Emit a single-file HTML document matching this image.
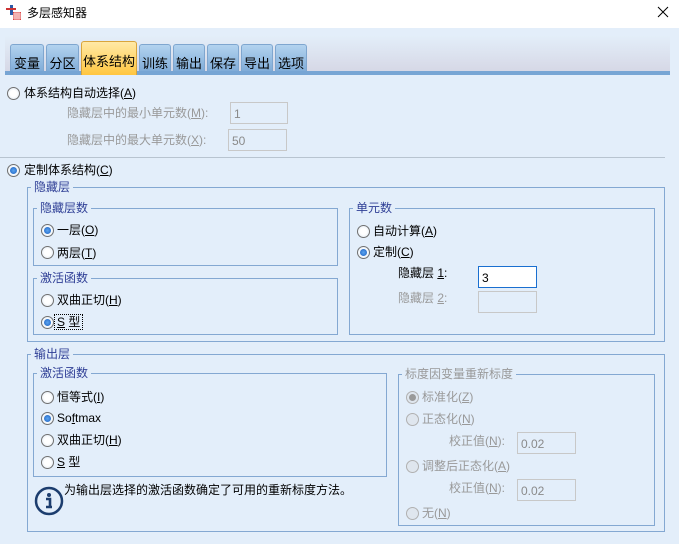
<!DOCTYPE html>
<html><head><meta charset="utf-8"><style>
*{margin:0;padding:0;box-sizing:border-box}
body{width:679px;height:544px;background:#e3eefa;font-family:"Liberation Sans","Noto Sans CJK SC",sans-serif;font-size:12px;color:#000;position:relative;overflow:hidden}
.a{position:absolute;white-space:nowrap;line-height:14px}
.title{position:absolute;left:0;top:0;width:679px;height:28px;background:#fff}
.strip{position:absolute;left:5px;top:36px;width:665px;height:35px;background:linear-gradient(#e3eef9,#d6d8e6)}
.bar{position:absolute;left:5px;top:71px;width:665px;height:4px;background:#77a5d4}
.tab{position:absolute;top:44px;height:27px;border:1px solid #7fa6cf;border-bottom:none;border-radius:3px 3px 0 0;background:linear-gradient(#b3d3ef,#80acd8);font-size:13px;padding-top:8px;text-align:center}
.tab.on{top:41px;height:34px;background:linear-gradient(#ffe9a6,#ffc640);border-color:#d9a53c;padding-top:9px}
.box{position:absolute;border:1px solid #84a8d2}
.gt{position:absolute;background:#e3eefa;color:#2f3f96;padding:0 3px;line-height:14px;white-space:nowrap}
.r{position:absolute;width:13px;height:13px;border-radius:50%;border:1px solid #707070;background:radial-gradient(#fff 40%,#d8e4ef)}
.r.on::after{content:"";position:absolute;left:2px;top:2px;width:7px;height:7px;border-radius:50%;background:radial-gradient(#5ba4f0,#1b5fbf)}
.r.dis{border-color:#b0b0b0;background:#dfe6ee}
.r.dis.on::after{background:#9a9a9a}
.in{position:absolute;border:1px solid #c8c8c8;background:#e3eefa;color:#8a8a8a;padding:4px 0 0 3px;line-height:14px}
.g{color:#999}
u{text-decoration:underline}
</style></head><body>
<div class="title"></div>
<svg class="a" style="left:6px;top:5px" width="16" height="16" viewBox="0 0 16 16"><rect x="0" y="3" width="3" height="2" fill="#c33"/><rect x="4" y="0" width="3" height="10" fill="#2b5aa8"/><rect x="1" y="3" width="9" height="2" fill="#c33"/><rect x="7" y="7" width="8" height="8" fill="#d44"/><path d="M7 9h8M7 11h8M7 13h8M9 7v8M11 7v8M13 7v8" stroke="#fff" stroke-width=".7"/></svg>
<div class="a" style="left:27px;top:6px;font-size:12px">多层感知器</div>
<svg class="a" style="left:657px;top:6px" width="12" height="12"><path d="M1 1L11 11M11 1L1 11" stroke="#000" stroke-width="1"/></svg>

<div class="strip"></div>
<div class="bar"></div>
<div class="tab" style="left:10px;width:34px">变量</div>
<div class="tab" style="left:46px;width:33px">分区</div>
<div class="tab on" style="left:81px;width:56px">体系结构</div>
<div class="tab" style="left:139px;width:32px">训练</div>
<div class="tab" style="left:173px;width:32px">输出</div>
<div class="tab" style="left:207px;width:32px">保存</div>
<div class="tab" style="left:241px;width:32px">导出</div>
<div class="tab" style="left:275px;width:32px">选项</div>

<div class="r" style="left:7px;top:87px"></div>
<div class="a" style="left:24px;top:86px">体系结构自动选择(<u>A</u>)</div>
<div class="a g" style="left:67px;top:106px">隐藏层中的最小单元数(<u>M</u>):</div>
<div class="in" style="left:230px;top:102px;width:58px;height:22px">1</div>
<div class="a g" style="left:67px;top:133px">隐藏层中的最大单元数(<u>X</u>):</div>
<div class="in" style="left:228px;top:129px;width:59px;height:22px">50</div>
<div class="a" style="left:0;top:157px;width:665px;height:1px;background:#b8c4d0"></div>
<div class="r on" style="left:7px;top:164px"></div>
<div class="a" style="left:24px;top:163px">定制体系结构(<u>C</u>)</div>

<div class="box" style="left:27px;top:187px;width:638px;height:155px"></div>
<div class="gt" style="left:31px;top:180px">隐藏层</div>
<div class="box" style="left:33px;top:208px;width:305px;height:58px"></div>
<div class="gt" style="left:37px;top:201px">隐藏层数</div>
<div class="r on" style="left:41px;top:224px"></div><div class="a" style="left:57px;top:223px">一层(<u>O</u>)</div>
<div class="r" style="left:41px;top:246px"></div><div class="a" style="left:57px;top:246px">两层(<u>T</u>)</div>
<div class="box" style="left:33px;top:278px;width:305px;height:57px"></div>
<div class="gt" style="left:37px;top:271px">激活函数</div>
<div class="r" style="left:41px;top:294px"></div><div class="a" style="left:57px;top:293px">双曲正切(<u>H</u>)</div>
<div class="r on" style="left:41px;top:316px"></div><div class="a" style="left:54px;top:314px;border:1px dotted #000;padding:0 2px"><u>S</u> 型</div>
<div class="box" style="left:349px;top:208px;width:306px;height:127px"></div>
<div class="gt" style="left:353px;top:201px">单元数</div>
<div class="r" style="left:357px;top:225px"></div><div class="a" style="left:373px;top:224px">自动计算(<u>A</u>)</div>
<div class="r on" style="left:357px;top:246px"></div><div class="a" style="left:373px;top:245px">定制(<u>C</u>)</div>
<div class="a" style="left:398px;top:266px">隐藏层 <u>1</u>:</div>
<div class="in" style="left:478px;top:266px;width:59px;height:22px;border-color:#1a6fd0;background:#fff;color:#000">3</div>
<div class="a g" style="left:398px;top:291px">隐藏层 <u>2</u>:</div>
<div class="in" style="left:478px;top:291px;width:59px;height:22px"></div>

<div class="box" style="left:27px;top:354px;width:638px;height:178px"></div>
<div class="gt" style="left:31px;top:347px">输出层</div>
<div class="box" style="left:33px;top:373px;width:354px;height:104px"></div>
<div class="gt" style="left:37px;top:366px">激活函数</div>
<div class="r" style="left:41px;top:391px"></div><div class="a" style="left:57px;top:390px">恒等式(<u>I</u>)</div>
<div class="r on" style="left:41px;top:412px"></div><div class="a" style="left:57px;top:411px">So<u>f</u>tmax</div>
<div class="r" style="left:41px;top:434px"></div><div class="a" style="left:57px;top:433px">双曲正切(<u>H</u>)</div>
<div class="r" style="left:41px;top:456px"></div><div class="a" style="left:57px;top:455px"><u>S</u> 型</div>
<svg class="a" style="left:34px;top:486px" width="30" height="30"><circle cx="15" cy="15" r="13" fill="none" stroke="#1c3d6e" stroke-width="2.5"/><circle cx="15" cy="9" r="2" fill="#1c3d6e"/><path d="M12 13h4v8h2M12 21h6" stroke="#1c3d6e" stroke-width="2.6" fill="none"/></svg>
<div class="a" style="left:64px;top:483px">为输出层选择的激活函数确定了可用的重新标度方法。</div>

<div class="box" style="left:398px;top:374px;width:257px;height:152px"></div>
<div class="gt g" style="left:402px;top:367px">标度因变量重新标度</div>
<div class="r dis on" style="left:406px;top:391px"></div><div class="a g" style="left:422px;top:390px">标准化(<u>Z</u>)</div>
<div class="r dis" style="left:406px;top:413px"></div><div class="a g" style="left:422px;top:412px">正态化(<u>N</u>)</div>
<div class="a g" style="left:449px;top:434px">校正值(<u>N</u>):</div>
<div class="in" style="left:517px;top:432px;width:59px;height:22px">0.02</div>
<div class="r dis" style="left:406px;top:460px"></div><div class="a g" style="left:422px;top:459px">调整后正态化(<u>A</u>)</div>
<div class="a g" style="left:449px;top:481px">校正值(<u>N</u>):</div>
<div class="in" style="left:517px;top:479px;width:59px;height:22px">0.02</div>
<div class="r dis" style="left:406px;top:507px"></div><div class="a g" style="left:422px;top:506px">无(<u>N</u>)</div>
</body></html>
